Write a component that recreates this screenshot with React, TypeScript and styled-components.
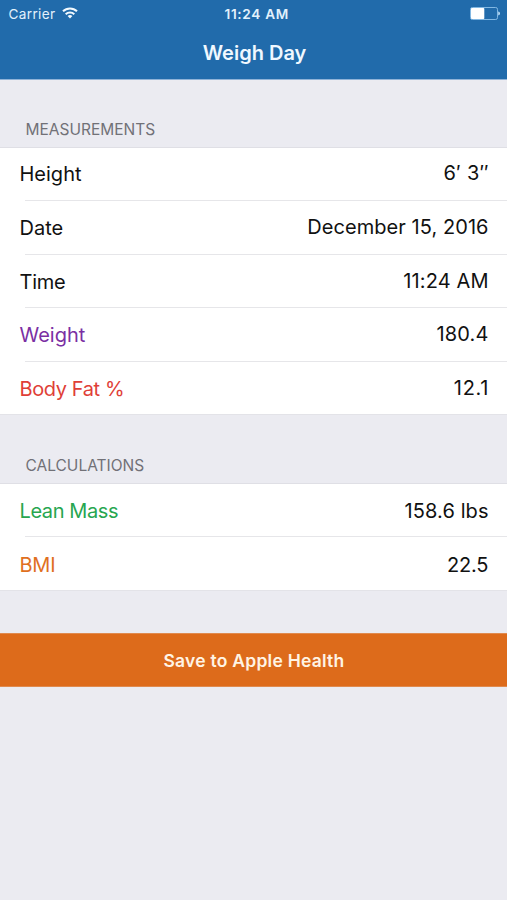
import React from "react";
import styled, { createGlobalStyle } from "styled-components";

const GlobalStyle = createGlobalStyle`
  * { box-sizing: border-box; }
  html, body { margin: 0; padding: 0; background: #ebebf1; }
  body { font-family: Inter, "Liberation Sans", sans-serif; color: #111; }
`;

const Screen = styled.div`
  width: 507px;
  height: 900px;
  overflow: hidden;
  background: #ebebf1;
`;

const Header = styled.header`
  height: 79px;
  background: #216bab;
  color: #fff;
  box-shadow: 0 1px 0 #8fb3d8;
`;

const StatusBar = styled.div`
  display: grid;
  grid-template-columns: 1fr auto 1fr;
  align-items: center;
  height: 27px;
  padding: 0 7px 0 8.5px;
  font-size: 13.6px;
  color: #e2f1fc;
`;

const Carrier = styled.div`
  display: flex;
  align-items: center;
  gap: 6px;
  letter-spacing: 0.35px;
`;

const WifiIcon = styled.svg`
  margin-top: -2px;
`;

const Clock = styled.div`
  font-weight: 600;
  letter-spacing: 0.7px;
  padding-left: 5px;
`;

const BatteryIcon = styled.svg`
  justify-self: end;
`;

const Title = styled.h1`
  margin: 0;
  height: 52px;
  padding-left: 2px;
  line-height: 52px;
  text-align: center;
  font-size: 20px;
  font-weight: 600;
  color: #f0f8ff;
`;

const SectionTitle = styled.h2`
  display: flex;
  align-items: flex-end;
  margin: 0;
  height: 68px;
  padding: 0 0 8px 25.5px;
  font-size: 15.5px;
  line-height: 19px;
  font-weight: 400;
  color: #717177;
`;

const List = styled.div`
  background: #fff;
  border-top: 1px solid #dfdfe5;
  border-bottom: 1px solid #e3e3e8;
`;

const Row = styled.div<{ $drop: number }>`
  display: flex;
  justify-content: space-between;
  align-items: center;
  height: 53.6px;
  padding: ${(p) => Math.max(0, p.$drop * 2)}px 18.5px ${(p) => Math.max(0, -p.$drop * 2)}px 19.5px;
  font-size: 20px;
  line-height: 24px;
  background: linear-gradient(#e6e6e9, #e6e6e9) 25px 100% / 100% 1px no-repeat;
  &:first-child { height: 53px; }
  &:last-child { height: 53px; margin-bottom: -0.4px; background: none; }
`;

const Label = styled.span<{ $color?: string; $tracking: number }>`
  color: ${(p) => p.$color ?? "#111"};
  letter-spacing: ${(p) => p.$tracking}px;
`;

const Value = styled.span<{ $tracking: number; $lift: number }>`
  letter-spacing: ${(p) => p.$tracking}px;
  margin-right: ${(p) => -p.$tracking}px;
  padding-bottom: ${(p) => p.$lift}px;
`;

const SaveButton = styled.button`
  display: block;
  width: 100%;
  height: 54px;
  margin: 42px 0 0;
  padding: 1px 0 0 1px;
  border: solid #e08a4e;
  border-width: 1px 0;
  background: #dd6b1b;
  color: #fff4e4;
  font: 600 17.5px/52px Inter, "Liberation Sans", sans-serif;
  letter-spacing: 0.24px;
  text-align: center;
`;

type Item = { label: string; value: string; color?: string; lt?: number; vt?: number; drop?: number };

const measurements: Item[] = [
  { label: "Height", value: "6′ 3″", vt: 0.3, drop: -1 },
  { label: "Date", value: "December 15, 2016", vt: 0.06 },
  { label: "Time", value: "11:24 AM", lt: -0.25, vt: 0.12, drop: 1 },
  { label: "Weight", value: "180.4", color: "#7b2fa3", vt: 0.2, drop: 0.4 },
  { label: "Body Fat %", value: "12.1", color: "#df3f38", lt: -0.4, vt: 0.75, drop: 1 },
];

const calculations: Item[] = [
  { label: "Lean Mass", value: "158.6 lbs", color: "#27a650", lt: -0.4, vt: 0.1, drop: 0.3 },
  { label: "BMI", value: "22.5", color: "#e0701f", lt: -0.25, vt: -0.15, drop: 0.8 },
];

function Rows({ items, lift }: { items: Item[]; lift: number }) {
  return (
    <List>
      {items.map((i) => (
        <Row key={i.label} $drop={i.drop ?? 0}>
          <Label $color={i.color} $tracking={i.lt ?? 0}>{i.label}</Label>
          <Value $tracking={i.vt ?? 0} $lift={lift}>{i.value}</Value>
        </Row>
      ))}
    </List>
  );
}

export default function App() {
  return (
    <Screen>
      <GlobalStyle />
      <Header>
        <StatusBar>
          <Carrier>
            Carrier
            <WifiIcon width="16" height="12" viewBox="0 0 16 12" fill="none" stroke="#f2faff" strokeWidth="2">
              <path d="M1 4.3a10 10 0 0 1 14 0" />
              <path d="M3.7 7.2a6.1 6.1 0 0 1 8.6 0" />
              <path d="M8 11.6 5.6 9.1a3.4 3.4 0 0 1 4.8 0z" fill="#f2faff" stroke="none" />
            </WifiIcon>
          </Carrier>
          <Clock>11:24 AM</Clock>
          <BatteryIcon width="30" height="13" viewBox="0 0 30 13">
            <rect x="0.5" y="0.5" width="27" height="12" rx="1.8" fill="none" stroke="#82b8e3" />
            <rect x="1" y="1" width="13.3" height="11" rx="0.8" fill="#fff" />
            <path d="M28.2 4.6c1.2.3 1.8 1 1.8 1.9s-.6 1.600-1.8 1.900z" fill="#b8dbf5" />
          </BatteryIcon>
        </StatusBar>
        <Title>Weigh Day</Title>
      </Header>
      <main>
        <SectionTitle>MEASUREMENTS</SectionTitle>
        <Rows items={measurements} lift={2} />
        <SectionTitle>CALCULATIONS</SectionTitle>
        <Rows items={calculations} lift={0} />
        <SaveButton>Save to Apple Health</SaveButton>
      </main>
    </Screen>
  );
}
